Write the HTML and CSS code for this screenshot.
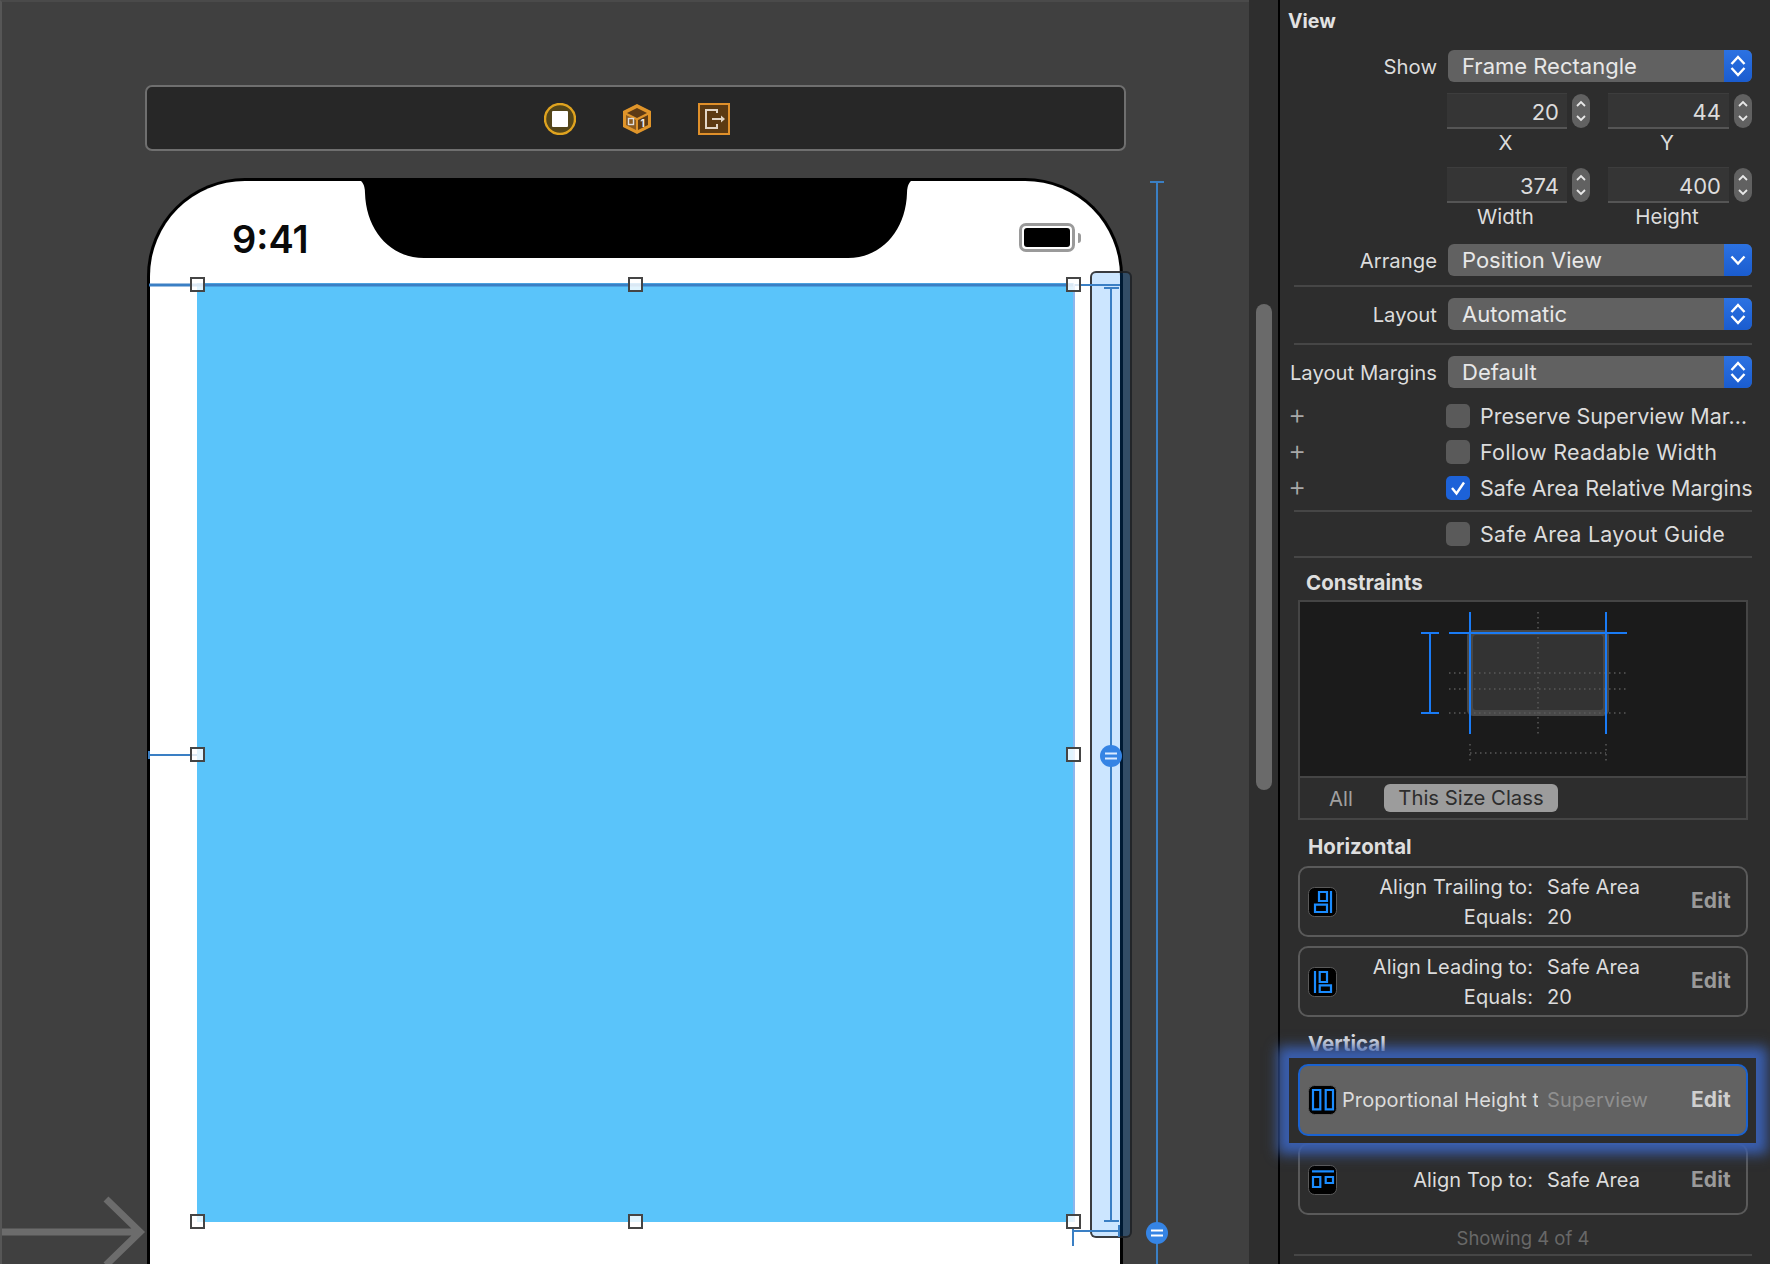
FILE: index.html
```html
<!DOCTYPE html>
<html lang="en">
<head>
    <meta charset="UTF-8">
    <title>View Inspector</title>
    <link rel="stylesheet" href="styles.css">
</head>
<body>
    <div class="canvas">
        <div class="toolbar">
            <svg width="32" height="32" viewBox="0 0 32 32">
                <circle cx="16" cy="16" r="15" fill="#54461a" stroke="#dfa31f" stroke-width="2.4"/>
                <rect x="8" y="8" width="16" height="16" rx="1" fill="#fff"/>
            </svg>
            <svg width="32" height="32" viewBox="0 0 32 32">
                <path d="M16 1 L30 8 V24 L16 31 L2 24 V8 Z" fill="#e0952a"/>
                <path d="M16 5 L26 10 L16 15 L6 10 Z" fill="#5c3a15"/>
                <path d="M5 12 L15 17 V27 L5 22 Z" fill="#8a5a20"/>
                <path d="M17 17 L27 12 V22 L17 27 Z" fill="#5c3a15"/>
                <rect x="7.5" y="15.5" width="5" height="6" fill="none" stroke="#ddd" stroke-width="1.4"/>
                <text x="19.5" y="24" class="cube-num">1</text>
            </svg>
            <svg width="32" height="32" viewBox="0 0 32 32">
                <rect x="1" y="1" width="30" height="30" fill="#5c3a12" stroke="#e0902a" stroke-width="2"/>
                <path d="M19 10 V7 H8 V25 H19 V21" fill="none" stroke="#e2d6c6" stroke-width="2"/>
                <path d="M14 16 H24" stroke="#e2d6c6" stroke-width="2"/>
                <path d="M23 12.5 L27 16 L23 19.5 Z" fill="#e2d6c6"/>
            </svg>
        </div>

        <div class="phone">
            <div class="status">
                <span class="time">9:41</span>
                <div class="battery"><div class="battery-fill"></div></div>
                <div class="battery-nub"></div>
            </div>
            <div class="blue-view"></div>
        </div>

        <div class="height-bar"></div>

        <!-- constraint lines and handles, in canvas coordinates -->
        <svg class="overlay" width="1250" height="1264" viewBox="0 0 1250 1264">
            <path d="M365 178 H355 Q365 180 365 193 C366 230 390 258 424 258 H848 C882 258 906 230 907 193 Q907 180 917 178 Z" fill="#000"/>

            <path d="M2 1232 H138 M106 1199 L140 1232 L106 1265" fill="none" stroke="#6c6c6c" stroke-width="7"/>

            <g fill="none" stroke="#3a7fc4" stroke-width="2">
                <path d="M149 285 H1074" stroke-width="3"/>
                <path d="M1074 285 H1120"/>
                <path d="M149 755 H197 M149 751 V759"/>
                <path d="M1074 1231 H1120 M1119 1225 V1237 M1073 1228 V1246"/>
                <path d="M1111 288 V1220 M1104 288 H1119 M1104 1221 H1119"/>
                <path d="M1157 182 V1264 M1150 182 H1164"/>
            </g>
            <path d="M1074 284 V1222" stroke="#8db5ec" stroke-width="2"/>

            <circle cx="1111" cy="756" r="11" fill="#3584e4"/>
            <path d="M1105 753.5 H1117 M1105 758.5 H1117" stroke="#dcebff" stroke-width="2"/>
            <circle cx="1157" cy="1233" r="11" fill="#3584e4"/>
            <path d="M1151 1230.5 H1163 M1151 1235.5 H1163" stroke="#fff" stroke-width="2"/>

            <g class="handles">
                <rect x="191" y="278" width="13" height="13"/>
                <rect x="629" y="278" width="13" height="13"/>
                <rect x="1067" y="278" width="13" height="13"/>
                <rect x="191" y="748" width="13" height="13"/>
                <rect x="1067" y="748" width="13" height="13"/>
                <rect x="191" y="1215" width="13" height="13"/>
                <rect x="629" y="1215" width="13" height="13"/>
                <rect x="1067" y="1215" width="13" height="13"/>
            </g>
        </svg>
    </div>

    <div class="gutter"><div class="thumb"></div></div>

    <div class="panel">
        <div class="panel-title">View</div>

        <div class="row row-show">
            <label>Show</label>
            <div class="popup"><span>Frame Rectangle</span><div class="popup-arrows"><svg width="16" height="24" viewBox="0 0 16 24"><path d="M1.5 10 L8 3 L14.5 10 M1.5 14 L8 21 L14.5 14"/></svg></div></div>
        </div>

        <div class="fields">
            <div class="field-group">
                <div class="field">20</div>
                <div class="stepper"><svg width="12" height="28" viewBox="0 0 12 28"><path d="M2 9 L6 5 L10 9 M2 19 L6 23 L10 19"/></svg></div>
                <div class="caption">X</div>
            </div>
            <div class="field-group">
                <div class="field">44</div>
                <div class="stepper"><svg width="12" height="28" viewBox="0 0 12 28"><path d="M2 9 L6 5 L10 9 M2 19 L6 23 L10 19"/></svg></div>
                <div class="caption">Y</div>
            </div>
            <div class="field-group">
                <div class="field">374</div>
                <div class="stepper"><svg width="12" height="28" viewBox="0 0 12 28"><path d="M2 9 L6 5 L10 9 M2 19 L6 23 L10 19"/></svg></div>
                <div class="caption">Width</div>
            </div>
            <div class="field-group">
                <div class="field">400</div>
                <div class="stepper"><svg width="12" height="28" viewBox="0 0 12 28"><path d="M2 9 L6 5 L10 9 M2 19 L6 23 L10 19"/></svg></div>
                <div class="caption">Height</div>
            </div>
        </div>

        <div class="row row-arrange">
            <label>Arrange</label>
            <div class="popup"><span>Position View</span><div class="popup-arrows"><svg width="16" height="24" viewBox="0 0 16 24"><path d="M1.5 8.5 L8 15.5 L14.5 8.5"/></svg></div></div>
        </div>
        <div class="sep sep-a"></div>

        <div class="row row-layout">
            <label>Layout</label>
            <div class="popup"><span>Automatic</span><div class="popup-arrows"><svg width="16" height="24" viewBox="0 0 16 24"><path d="M1.5 10 L8 3 L14.5 10 M1.5 14 L8 21 L14.5 14"/></svg></div></div>
        </div>
        <div class="sep sep-b"></div>

        <div class="row row-margins">
            <label>Layout Margins</label>
            <div class="popup"><span>Default</span><div class="popup-arrows"><svg width="16" height="24" viewBox="0 0 16 24"><path d="M1.5 10 L8 3 L14.5 10 M1.5 14 L8 21 L14.5 14"/></svg></div></div>
        </div>

        <div class="checks">
            <div class="check-row"><span class="plus">+</span><div class="box"></div><span>Preserve Superview Mar…</span></div>
            <div class="check-row"><span class="plus">+</span><div class="box"></div><span class="spaced">Follow Readable Width</span></div>
            <div class="check-row"><span class="plus">+</span><div class="box checked"><svg width="24" height="24" viewBox="0 0 24 24"><path d="M6 12 L10.5 17.5 L18 6.5"/></svg></div><span>Safe Area Relative Margins</span></div>
        </div>
        <div class="sep sep-c"></div>
        <div class="check-row check-single"><span class="plus"></span><div class="box"></div><span class="spaced">Safe Area Layout Guide</span></div>
        <div class="sep sep-c"></div>

        <div class="heading heading-constraints">Constraints</div>
        <div class="constraint-box">
            <svg class="diagram" width="446" height="174" viewBox="0 0 446 174">
                <rect x="167" y="28" width="142" height="86" rx="6" fill="#484848"/>
                <rect x="173" y="33" width="130" height="75" rx="3" fill="#333"/>
                <g class="dots">
                    <path d="M238 10 V132 M149 71 H327 M149 87 H327 M149 111 H327"/>
                    <path d="M170 151 H306 M170 142 V160 M306 142 V160"/>
                </g>
                <path d="M170 10 V132 M306 10 V132 M149 31 H327 M130 31 V111 M121 31 H139 M121 111 H139" fill="none" stroke="#1a7bf5" stroke-width="2"/>
            </svg>
            <div class="size-tabs">
                <span class="tab-all">All</span>
                <span class="tab-active">This Size Class</span>
            </div>
        </div>

        <div class="heading heading-horizontal">Horizontal</div>
        <div class="card">
            <svg class="card-icon" width="29" height="30" viewBox="0 0 29 30"><rect x="0.5" y="0.5" width="28" height="29" rx="6" class="icon-bg"/><path d="M23 4 V26 M11 5 H19 V14 H11 Z M7 17.7 H19 V25 H7 Z"/></svg>
            <div class="card-text">
                <span class="c-label">Align Trailing to:</span><span>Safe Area</span>
                <span class="c-label">Equals:</span><span>20</span>
            </div>
            <span class="edit">Edit</span>
        </div>
        <div class="card card-second">
            <svg class="card-icon" width="29" height="30" viewBox="0 0 29 30"><rect x="0.5" y="0.5" width="28" height="29" rx="6" class="icon-bg"/><path d="M7 4 V26 M11.7 5 H19 V15 H11.7 Z M11.7 18.3 H23 V25 H11.7 Z"/></svg>
            <div class="card-text">
                <span class="c-label">Align Leading to:</span><span>Safe Area</span>
                <span class="c-label">Equals:</span><span>20</span>
            </div>
            <span class="edit">Edit</span>
        </div>

        <div class="heading heading-vertical">Vertical</div>
        <div class="highlight">
            <div class="card card-selected">
                <svg class="card-icon" width="29" height="30" viewBox="0 0 29 30"><rect x="0.5" y="0.5" width="28" height="29" rx="6" class="icon-bg"/><path d="M5 5 H12.3 V24.3 H5 Z M17.7 5 H25 V24.3 H17.7 Z"/></svg>
                <div class="card-text">
                    <span class="c-label c-clip">Proportional Height to:</span><span class="c-dim">Superview</span>
                </div>
                <span class="edit">Edit</span>
            </div>
        </div>
        <div class="card card-last">
            <svg class="card-icon" width="29" height="30" viewBox="0 0 29 30"><rect x="0.5" y="0.5" width="28" height="29" rx="6" class="icon-bg"/><path d="M4 6.3 H26 M5 12 H12.3 V22 H5 Z M17.7 12 H25 V18 H17.7 Z"/></svg>
            <div class="card-text">
                <span class="c-label">Align Top to:</span><span>Safe Area</span>
            </div>
            <span class="edit">Edit</span>
        </div>

        <div class="showing">Showing 4 of 4</div>
        <div class="sep sep-last"></div>
    </div>
</body>
</html>
```

FILE: styles.css
```css
html, body {
    margin: 0;
    padding: 0;
}
body {
    display: flex;
    width: 1770px;
    height: 1264px;
    overflow: hidden;
    font-family: Inter, "Noto Sans", sans-serif;
    background-color: #2d2d2d;
    color: #dcdcdc;
}

/* canvas */
.canvas {
    position: relative;
    flex: 0 0 1249px;
    height: 1264px;
    overflow: hidden;
    box-sizing: border-box;
    background-color: #404040;
    border-left: 2px solid #565656;
    border-top: 2px solid #4a4a4a;
}
.toolbar {
    display: flex;
    align-items: center;
    justify-content: center;
    gap: 45px;
    box-sizing: border-box;
    width: 981px;
    height: 66px;
    margin: 83px 0 0 143px;
    padding: 2px 0 0 2px;
    background-color: #272727;
    border: 2px solid #6f6f6f;
    border-radius: 7px;
}
.cube-num {
    font-size: 10px;
    font-weight: 700;
    fill: #eee;
}
.phone {
    box-sizing: border-box;
    width: 976px;
    height: 1100px;
    margin: 27px 0 0 145px;
    background-color: #fff;
    border: 3px solid #000;
    border-bottom: none;
    border-radius: 98px 98px 0 0;
}
.status {
    display: flex;
    align-items: flex-start;
    box-sizing: border-box;
    height: 102px;
    padding: 43px 0 0 82px;
}
.time {
    width: 787px;
    font-size: 38px;
    line-height: 30px;
    font-weight: 600;
    color: #0a0a0a;
}
.battery {
    box-sizing: border-box;
    width: 56px;
    height: 29px;
    margin-top: -1px;
    padding: 2px;
    border: 3px solid #9a9a9a;
    border-radius: 7px;
}
.battery-fill {
    height: 100%;
    background-color: #000;
    border-radius: 3px;
}
.battery-nub {
    width: 3px;
    height: 10px;
    margin: 9px 0 0 3px;
    background-color: #9a9a9a;
    border-radius: 0 3px 3px 0;
}
.blue-view {
    width: 876px;
    height: 939px;
    margin-left: 47px;
    background-color: #5ac4fa;
}
.height-bar {
    position: absolute;
    left: 1088px;
    top: 269px;
    box-sizing: border-box;
    width: 42px;
    height: 967px;
    background-color: rgba(0, 128, 255, 0.2);
    border: 2px solid rgba(30, 30, 30, 0.85);
    border-radius: 6px;
}
.overlay {
    position: absolute;
    left: -2px;
    top: -2px;
}
.handles rect {
    fill: rgba(255, 255, 255, 0.82);
    stroke: #454545;
    stroke-width: 2;
}

/* gutter */
.gutter {
    flex: 0 0 29px;
    box-sizing: border-box;
    padding: 304px 6px 0 7px;
    background-color: #2e2e2e;
}
.thumb {
    height: 486px;
    background-color: #6a6a6a;
    border-radius: 8px;
}

/* inspector panel */
.panel {
    flex: 0 0 492px;
    box-sizing: border-box;
    padding: 0 18px 0 14px;
    border-left: 2px solid #000;
    font-size: 20px;
}
.panel-title {
    height: 40px;
    margin-left: -6px;
    font-size: 19.5px;
    line-height: 42px;
    font-weight: 700;
    color: #e2e2e2;
}
.row {
    display: flex;
    align-items: center;
    justify-content: flex-end;
    width: 458px;
    height: 32px;
    gap: 11px;
}
.row label {
    font-size: 20.3px;
    white-space: nowrap;
}
.row-show { margin-top: 10px; }
.row-arrange { margin-top: 3px; }
.row-layout { margin-top: 11px; }
.row-margins { margin-top: 11px; }
.popup {
    display: flex;
    justify-content: space-between;
    align-items: center;
    flex: 0 0 304px;
    height: 32px;
    padding-left: 14px;
    box-sizing: border-box;
    background-color: #616161;
    border-radius: 6px;
    overflow: hidden;
    font-size: 22px;
    color: #e8e8e8;
}
.popup-arrows {
    display: flex;
    align-items: center;
    justify-content: center;
    width: 28px;
    height: 32px;
    background: linear-gradient(#2c72e2, #1a5ccf);
}
.popup-arrows path {
    fill: none;
    stroke: #fff;
    stroke-width: 2.4;
}
.fields {
    display: grid;
    grid-template-columns: 143px 144px;
    column-gap: 18px;
    margin: 11px 0 0 153px;
}
.field-group {
    display: grid;
    grid-template-columns: 1fr 18px;
    column-gap: 5px;
}
.field {
    box-sizing: border-box;
    height: 36px;
    padding-right: 8px;
    font-size: 22px;
    line-height: 37px;
    text-align: right;
    background-color: #353535;
    border-top: 1px solid #3d3d3d;
    border-bottom: 2px solid #555;
}
.stepper {
    display: flex;
    align-items: center;
    justify-content: center;
    height: 34px;
    margin-top: 1px;
    background-color: #616161;
    border-radius: 9px;
}
.stepper path {
    fill: none;
    stroke: #e8e8e8;
    stroke-width: 1.8;
}
.caption {
    grid-column: 1;
    height: 38px;
    padding-right: 3px;
    font-size: 20.5px;
    line-height: 28px;
    text-align: center;
}
.sep {
    width: 458px;
    height: 2px;
    background-color: #464646;
}
.sep-a { margin-top: 9px; }
.sep-b { margin-top: 13px; }
.sep-c { margin-top: 10px; }
.checks {
    margin-top: 16px;
}
.check-row {
    display: flex;
    align-items: center;
    height: 24px;
    margin-bottom: 12px;
    margin-left: -3px;
    font-size: 21.5px;
    white-space: nowrap;
}
.checks .check-row:last-child {
    margin-bottom: 0;
}
.check-single {
    margin-top: 10px;
    margin-bottom: 0;
}
.spaced {
    letter-spacing: 0.27px;
}
.plus {
    flex: 0 0 155px;
    align-self: flex-start;
    font-size: 28px;
    line-height: 20px;
    text-indent: -3px;
    color: #a8a8a8;
    font-weight: 300;
}
.box {
    flex: 0 0 24px;
    height: 24px;
    margin-right: 10px;
    background-color: #5a5a5a;
    border-radius: 5px;
}
.box.checked {
    background-color: #1d62d8;
}
.box path {
    fill: none;
    stroke: #fff;
    stroke-width: 2.4;
}
.heading {
    font-size: 20.5px;
    font-weight: 700;
    line-height: 24px;
    color: #dedede;
}
.heading-constraints {
    margin: 13px 0 5px 12px;
}
.constraint-box {
    box-sizing: border-box;
    width: 450px;
    height: 220px;
    margin-left: 4px;
    border: 2px solid #454545;
}
.diagram {
    display: block;
    background-color: #1b1b1b;
}
.dots path {
    fill: none;
    stroke: #5a5a5a;
    stroke-width: 1.5;
    stroke-dasharray: 1.5 3.5;
}
.size-tabs {
    display: flex;
    align-items: center;
    height: 42px;
    border-top: 2px solid #454545;
    box-sizing: border-box;
    font-size: 20.3px;
}
.tab-all {
    width: 82px;
    margin-right: 2px;
    text-align: center;
    color: #a0a0a0;
}
.tab-active {
    width: 174px;
    height: 28px;
    line-height: 28px;
    text-align: center;
    color: #2d2d2d;
    background-color: #9c9c9c;
    border-radius: 6px;
}
.heading-horizontal {
    margin: 15px 0 7px 14px;
}
.card {
    display: flex;
    align-items: center;
    box-sizing: border-box;
    width: 450px;
    height: 71px;
    margin-left: 4px;
    padding-left: 8px;
    border: 2px solid #5a5a5a;
    border-radius: 10px;
    font-size: 20px;
    letter-spacing: 0.1px;
}
.card-second {
    margin-top: 9px;
}
.card-icon {
    flex: 0 0 29px;
}
.card-icon path {
    fill: none;
    stroke: #1a8cff;
    stroke-width: 2.2;
}
.icon-bg {
    fill: #000;
    stroke: #5a5a5a;
}
.card-text {
    display: grid;
    grid-template-columns: 196px 144px;
    column-gap: 14px;
    line-height: 30px;
    white-space: nowrap;
}
.c-label {
    text-align: right;
}
.c-clip {
    width: 196px;
    margin-left: 5px;
    overflow: hidden;
    text-align: left;
}
.c-dim {
    color: #8f8f8f;
}
.edit {
    margin-bottom: 2px;
    font-size: 21px;
    font-weight: 700;
    color: #9a9a9a;
}
.heading-vertical {
    margin: 15px 0 2px 14px;
}
.highlight {
    position: relative;
    box-sizing: border-box;
    width: 467px;
    height: 85px;
    margin-left: -5px;
    padding: 6px 0 0 9px;
    background-color: #2d2d2d;
    box-shadow: 0 0 12px 11px #3a5fb0;
}
.card-selected {
    height: 72px;
    margin-left: 0;
    background-color: #626262;
    border-color: #1a62d0;
}
.card-selected .edit {
    color: #cfcfcf;
}
.card-last {
    height: 72px;
    padding-top: 2px;
}
.showing {
    width: 458px;
    margin-top: 11px;
    font-size: 18.5px;
    line-height: 24px;
    text-align: center;
    color: #686868;
}
.sep-last {
    margin-top: 4px;
}
```
